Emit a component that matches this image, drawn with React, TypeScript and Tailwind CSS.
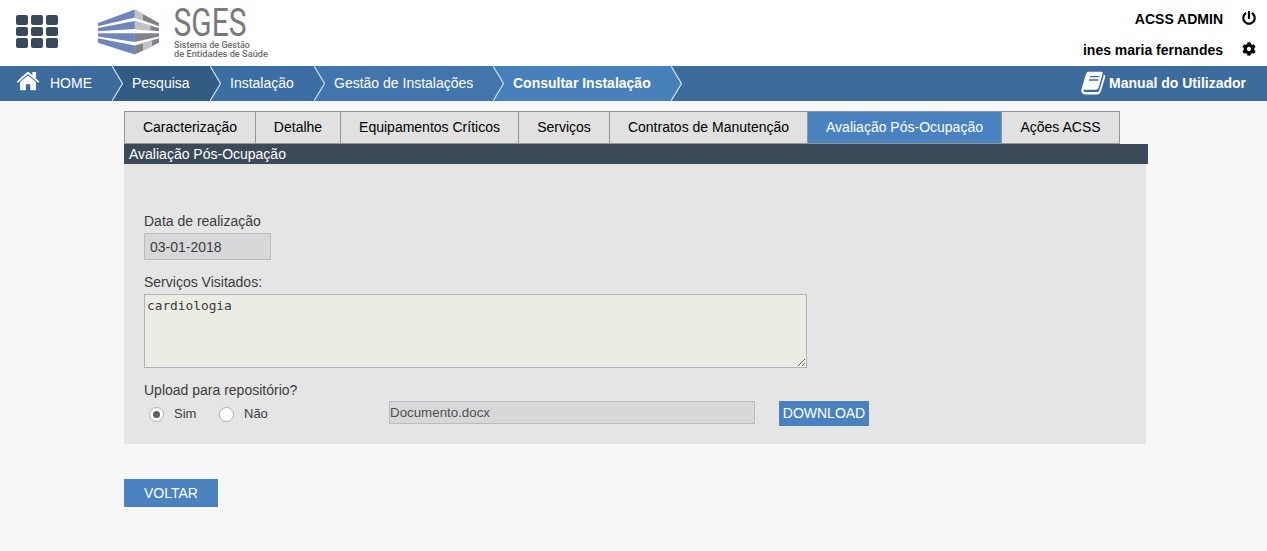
import { FaPowerOff, FaCog } from "react-icons/fa";

const crumbs = [
  { label: "Pesquisa", box: "w-[98px]", bg: "#335c85", bold: false },
  { label: "Instalação", box: "w-[104px]", bg: "#3c6ea3", bold: false },
  { label: "Gestão de Instalações", box: "w-[179px]", bg: "#4175ab", bold: false },
  { label: "Consultar Instalação", box: "w-[178px]", bg: "#4880bb", bold: true },
];

const tabs = [
  { label: "Caracterização", box: "w-[132px]" },
  { label: "Detalhe", box: "w-[85px]" },
  { label: "Equipamentos Críticos", box: "w-[178px]" },
  { label: "Serviços", box: "w-[91px]" },
  { label: "Contratos de Manutenção", box: "w-[198px]" },
  { label: "Avaliação Pós-Ocupação", box: "w-[194px]", active: true },
  { label: "Ações ACSS", box: "w-[118px]" },
];

function Arrow({ left, right }: { left: string; right: string }) {
  return (
    <svg width="12" height="35" viewBox="0 0 12 35" className="shrink-0">
      <rect width="12" height="35" fill={right} />
      <path d="M0 0L11 17.5L0 35Z" fill={left} />
      <path d="M0 0L10.5 17.5L0 35" fill="none" stroke="#dcebfa" strokeWidth="1.1" />
    </svg>
  );
}

function HomeIcon() {
  return (
    <svg width="24" height="20" viewBox="0 0 24 20" fill="#fff" className="mb-[5px] mr-[10px] shrink-0">
      <path d="M12 4.4L20 11V18.3Q20 19.3 19 19.3H14.3V13.3H9.9V19.3H5Q4 19.3 4 18.3V11Z" />
      <path d="M0.8 10.6L11 1.2Q12 0.4 13 1.2L16.4 4.3V1H20V7.6L23.3 10.6L22.2 11.8L12 3L1.9 11.8Z" />
    </svg>
  );
}

function BookIcon() {
  return (
    <svg width="25" height="24" viewBox="0 0 25 24" className="mr-[3px] shrink-0">
      <path
        d="M8 0.8H20.2Q22.2 0.8 21.6 2.8L17.4 17Q16.8 18.8 15 18.8H3.8Q2.4 18.8 2.6 20Q2.8 21 4.2 21H16.6Q17.8 21 18.2 19.8L22.6 5Q22.8 4.2 22.7 3.4Q24.8 4.2 24.2 6L19.8 20.6Q18.9 23.4 16.2 23.4H4Q1.4 23.4 0.5 21Q0 19.6 0.7 17.6L5 3Q5.8 0.8 8 0.8Z"
        fill="#fff"
      />
      <path d="M9 5.6H18.4M8 9H17.4" stroke="#3d6b9c" strokeWidth="1.3" fill="none" />
    </svg>
  );
}

function Logo() {
  return (
    <svg width="174" height="60" viewBox="0 0 174 60" className="ml-[40px] shrink-0">
      <g fill="#6e86b8">
        <path d="M0 23L36.8 9.5V17.5L0 26.3Z" />
        <path d="M0 28L36.8 21V29L0 31.3Z" />
        <path d="M0 33.3L36.8 33.3V42L0 36.5Z" />
        <path d="M0 38.3L36.8 45.5V54.5L0 42.8Z" />
      </g>
      <g fill="#828386">
        <path d="M36.8 9.5L61 23V26.3L36.8 17.5Z" />
        <path d="M36.8 21L61 28V31.3L36.8 29Z" />
        <path d="M36.8 33.3H61V36.5L36.8 42Z" />
        <path d="M36.8 45.5L61 38.3V42.8L36.8 54.5Z" />
      </g>
      <g fill="#c3c4c9">
        <path d="M36.8 9.5L45 14.1V20.5L36.8 17.5Z" />
        <path d="M36.8 21L52.5 25.5V30.5L36.8 29Z" />
        <path d="M45 43.1L54 40.4V46.2L45 50.6Z" />
      </g>
      <text x="75.5" y="36" fontSize="39" textLength="73" lengthAdjust="spacingAndGlyphs" fill="#78797c" fontFamily="Roboto, sans-serif">SGES</text>
      <text x="76" y="47.7" fontSize="9.3" textLength="76" lengthAdjust="spacingAndGlyphs" fill="#6c6d70" fontWeight="500" fontFamily="Roboto, sans-serif">Sistema de Gestão</text>
      <text x="76" y="57.2" fontSize="9.3" textLength="94" lengthAdjust="spacingAndGlyphs" fill="#6c6d70" fontWeight="500" fontFamily="Roboto, sans-serif">de Entidades de Saúde</text>
    </svg>
  );
}

function Radio({ on, label }: { on?: boolean; label: string }) {
  return (
    <label className="flex w-[70px] items-center text-[13px] leading-4">
      <span className="mr-[10px] mt-[2px] flex size-[15px] items-center justify-center rounded-full border border-[#b0b0b0] bg-white">
        {on && <span className="size-[7px] rounded-full bg-[#5e5e5e]" />}
      </span>
      {label}
    </label>
  );
}

export default function App() {
  return (
    <div className="h-[551px] w-[1267px] overflow-hidden bg-[#f7f7f7] font-['Liberation_Sans',Arial,sans-serif] text-sm text-[#3c3c3c]">
      <header className="flex h-[66px] bg-white">
        <div className="ml-4 mt-[15px] grid h-[33px] grid-cols-3 gap-x-[3px] gap-y-[2px]">
          {Array.from({ length: 9 }, (_, i) => (
            <span key={i} className="h-[9.5px] w-3 rounded-[2px] bg-[#3a4959]" />
          ))}
        </div>
        <Logo />
        <div className="ml-auto flex flex-col items-end gap-[15px] pr-[11px] pt-[11px] font-bold leading-4 text-black">
          <div className="flex items-center">
            ACSS ADMIN
            <FaPowerOff className="mb-[2px] ml-[19px] size-[14px]" />
          </div>
          <div className="flex items-center">
            ines maria fernandes
            <FaCog className="mb-[2px] ml-[19px] size-[14px]" />
          </div>
        </div>
      </header>

      <nav className="flex h-[35px] items-center bg-[#3d6b9c] text-white">
        <div className="flex h-full w-[112px] items-center pb-px pl-4">
          <HomeIcon />
          HOME
        </div>
        <Arrow left="#3d6b9c" right="#335c85" />
        {crumbs.map((c, i) => (
          <div key={c.label} className={`flex h-full ${c.box}`}>
            <div
              className={`flex h-full flex-1 items-center whitespace-nowrap pb-px pl-2 ${c.bold ? "font-bold" : ""}`}
              style={{ backgroundColor: c.bg }}
            >
              {c.label}
            </div>
            <Arrow left={c.bg} right={crumbs[i + 1]?.bg ?? "#3d6b9c"} />
          </div>
        ))}
        <div className="ml-auto flex items-center pb-px pr-[21px] font-bold">
          <BookIcon />
          Manual do Utilizador
        </div>
      </nav>

      <main className="ml-[124px] pt-[10px]">
        <div className="flex h-[33px]">
          {tabs.map((t, i) => (
            <div
              key={t.label}
              className={`flex items-center justify-center whitespace-nowrap border-y border-r border-[#8f9798] pb-[2px] ${t.box} ${
                t.active ? "bg-[#4a82c0] text-white" : "bg-[#e1e1e1] text-black"
              } ${i === 0 ? "border-l" : ""}`}
            >
              {t.label}
            </div>
          ))}
        </div>
        <h1 className="h-5 w-[1024px] bg-[#3b4958] pl-[5px] leading-5 text-white">Avaliação Pós-Ocupação</h1>
        <section className="h-[280px] w-[1022px] bg-[#e5e5e5] px-5 pt-[49px]">
          <div className="leading-4">Data de realização</div>
          <div className="mt-1 flex h-[27px] w-[127px] items-center border border-[#bcbcbe] bg-[#d8d8da] pl-[5px]">03-01-2018</div>
          <div className="mt-[14px] leading-4">Serviços Visitados:</div>
          <textarea
            defaultValue="cardiologia"
            className="mt-1 block h-[74px] w-[663px] resize border border-[#b4b4b4] bg-[#ebece3] px-[2px] py-[3px] font-['DejaVu_Sans_Mono',monospace] text-[12.8px] leading-4"
          />
          <div className="mt-[14px] leading-4">Upload para repositório?</div>
          <div className="mt-[3px] flex">
            <div className="ml-[5px] flex h-[25px]">
              <Radio on label="Sim" />
              <Radio label="Não" />
            </div>
            <div className="ml-[100px] flex h-[23px] w-[366px] items-center border border-[#bcbcbe] bg-[#d8d8da] text-[13.333px] text-[#505050]">
              Documento.docx
            </div>
            <button className="ml-6 h-[25px] w-[90px] bg-[#4a82c0] pb-px text-white">DOWNLOAD</button>
          </div>
        </section>
        <button className="mt-[35px] h-7 w-[94px] bg-[#4a82c0] text-white">VOLTAR</button>
      </main>
    </div>
  );
}
